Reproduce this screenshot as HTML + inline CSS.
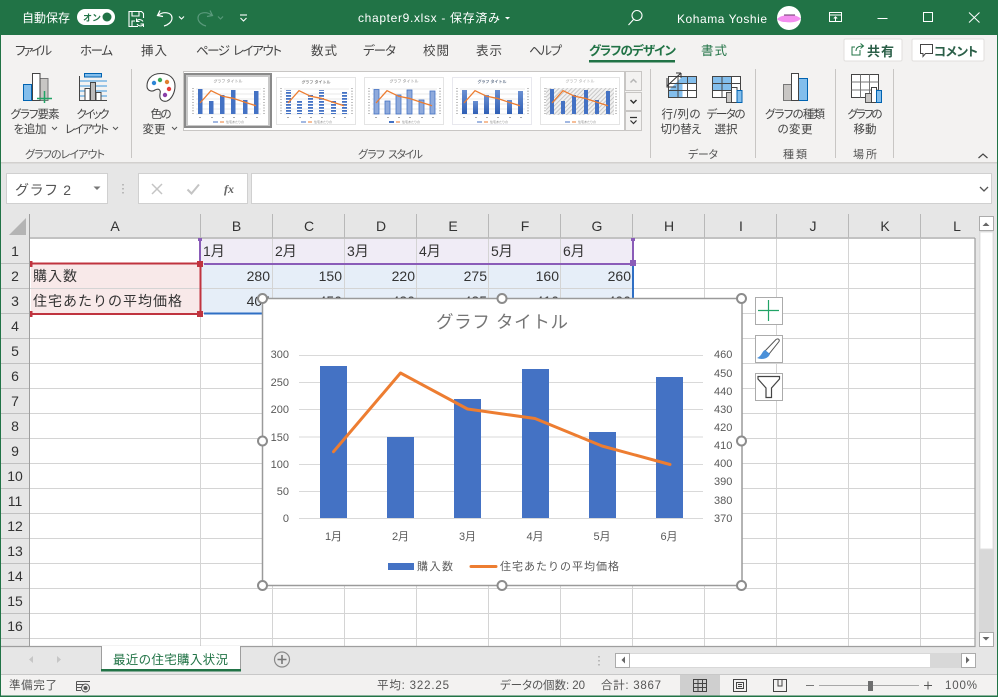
<!DOCTYPE html>
<html lang="ja"><head><meta charset="utf-8"><title>chapter9.xlsx</title>
<style>
html,body{margin:0;padding:0;background:#fff;width:998px;height:697px;overflow:hidden}
svg{display:block;position:absolute;left:0;top:0}
text{font-family:"Liberation Sans","Noto Sans CJK JP",sans-serif;fill:#444;font-size:12px}
.t{fill:#fff}
.tab{font-size:12.5px;fill:#444;font-feature-settings:"palt"}
.rb{font-size:11.5px;text-anchor:middle;fill:#444;font-feature-settings:"palt"}
.gl{font-size:11px;text-anchor:middle;fill:#555;font-feature-settings:"palt"}
.gs{font-size:11px;fill:#555;font-feature-settings:"palt"}
.h{font-size:14px;text-anchor:middle;fill:#333}
.rn{font-size:14px;text-anchor:middle;fill:#333}
.c{font-size:14px;fill:#333}
.n{font-size:14px;fill:#333;text-anchor:end}
.ax{font-size:11px;fill:#595959}
.s{font-size:11.5px;fill:#555;font-feature-settings:"palt"}
.mini{font-size:4px;fill:#888;text-anchor:middle}
</style></head><body>
<svg width="998" height="697" viewBox="0 0 998 697" xmlns="http://www.w3.org/2000/svg">
<defs>
<pattern id="st" width="4" height="3" patternUnits="userSpaceOnUse"><rect width="4" height="3" fill="#fff"/><rect width="4" height="1.8" fill="#4472c4"/></pattern>
<pattern id="ht" width="3" height="3" patternUnits="userSpaceOnUse" patternTransform="rotate(45)"><rect width="3" height="3" fill="#f2f2f2"/><rect width="1" height="3" fill="#c8c8c8"/></pattern>
<linearGradient id="gr" x1="0" y1="0" x2="0" y2="1"><stop offset="0" stop-color="#6a8fd2"/><stop offset="1" stop-color="#2f5fb5"/></linearGradient>
<g id="axes">
<g stroke="#e2e2e2" stroke-width=".7"><path d="M8 12H73M8 17H73M8 22H73M8 27H73M8 32H73M8 37H73"/></g>
<path d="M5 11V38M76 11V38" stroke="#999" stroke-width="1.6" stroke-dasharray=".8 2" fill="none"/>
<path d="M11 40.500h2M23 40.500h2M34 40.500h2M45 40.500h2M57 40.500h2M68 40.500h2" stroke="#aaa"/>
</g>
<path id="ln" d="M12 26L23 13.700L34.700 19.300L45 21.300L57 25.300L68 28.700" fill="none" stroke="#ed7d31" stroke-width="1.300"/>
</defs>

<!-- window base -->
<rect width="998" height="697" fill="#e6e6e6"/>
<!-- title bar -->
<rect width="998" height="35" fill="#217346"/>
<text x="22" y="22" class="t" style="font-size:12px">自動保存</text>
<rect x="77" y="9" width="38" height="16" rx="8" fill="#fff"/>
<text x="83" y="21" style="font-size:9px;fill:#217346;font-weight:bold">オン</text>
<circle cx="107" cy="17" r="4.500" fill="#217346"/>
<g fill="none" stroke="#fff" stroke-width="1.100">
<path d="M138 26.500H129V11.500H141.500L143.500 13.500V18"/>
<path d="M132 11.500V16H139V11.500M132 26V21H135"/>
<path d="M143 21.500a4 4 0 0 0-6.500-.5M137 24a4 4 0 0 0 6.500 .5M136.500 18.500V21.500H139.500M143.500 27V24H140.500" stroke-width="1"/>
<path d="M160 10.500L157.500 15.500L163 16.500M158 15.500C163 11 172 12 172 18C172 22 168 25 164 26" stroke-width="1.200"/>
<path d="M179 16.500l2.500 2.500l2.500-2.500"/>
<g stroke="#5a9a7c"><path d="M210 10.500L212.500 15.500L207 16.500M212 15.500C207 11 198 12 198 18C198 22 202 25 206 26" stroke-width="1.200"/><path d="M218 16.500l2.500 2.500l2.500-2.500"/></g>
<path d="M240 15h7"/><path d="M240.500 18l3 3l3-3"/>
</g>
<text x="358" y="22" class="t" style="font-size:12px" textLength="142">chapter9.xlsx  -  保存済み</text>
<path d="M505 17h5l-2.500 2.500z" fill="#fff"/>
<g fill="none" stroke="#fff" stroke-width="1.100"><circle cx="637" cy="15.500" r="5"/><path d="M633.500 19.500L628.500 25"/></g>
<text x="677" y="23" class="t" style="font-size:12px" textLength="90">Kohama Yoshie</text>
<circle cx="789" cy="18" r="12" fill="#fff"/>
<path d="M777 19C781 15 786 15.500 789 15C793 14 797 16 801 18.500C797 23 790 22.500 785 22C782 22 779 21 777 19Z" fill="#f48ef0"/>
<path d="M784 15h11" stroke="#6a3a6a" stroke-width="1"/>
<g fill="none" stroke="#fff" stroke-width="1"><rect x="829.500" y="12.500" width="12" height="9"/><path d="M829.500 15H841.500M835.500 21V17M833.800 18.500L835.500 16.800L837.200 18.500"/>
<path d="M877.500 18.500H887.500"/><rect x="923.500" y="12.500" width="9" height="9"/><path d="M969 12.500L979.500 22.500M979.500 12.500L969 22.500"/></g>

<!-- ribbon -->
<rect x="0" y="35" width="998" height="127" fill="#f3f2f1"/>
<rect x="0" y="162" width="998" height="1.500" fill="#d2d0ce"/>
<text x="15" y="55" class="tab" textLength="37">ファイル</text>
<text x="80" y="55" class="tab" textLength="33">ホーム</text>
<text x="141" y="55" class="tab" textLength="26">挿入</text>
<text x="196" y="55" class="tab" textLength="34">ページ</text>
<text x="233" y="55" class="tab" textLength="49">レイアウト</text>
<text x="311" y="55" class="tab" textLength="26">数式</text>
<text x="363" y="55" class="tab" textLength="33">データ</text>
<text x="423" y="55" class="tab" textLength="26">校閲</text>
<text x="476" y="55" class="tab" textLength="26">表示</text>
<text x="529" y="55" class="tab" textLength="33">ヘルプ</text>
<text x="589" y="55" class="tab" textLength="87" style="fill:#217346;font-weight:bold">グラフのデザイン</text>
<rect x="589" y="60" width="86" height="2.500" fill="#217346"/>
<text x="701" y="55" class="tab" textLength="26" style="fill:#217346">書式</text>
<rect x="844" y="39" width="58" height="22" rx="1.500" fill="#fff" stroke="#e1dfdd"/>
<rect x="912" y="39" width="72" height="22" rx="1.500" fill="#fff" stroke="#e1dfdd"/>
<g fill="none" stroke="#217346" stroke-width="1"><path d="M860 50v5h-8v-8h3M856 51c0-4 3-5 7-5M860.500 43.500L863.500 46L860.500 48.500"/><path d="M920.500 46.500h12v9h-7l-2.500 3v-3h-2.500z" stroke="#444" transform="translate(0,-2)"/></g>
<text x="867" y="56" style="font-size:13px;font-weight:bold;fill:#2b5f48" textLength="27">共有</text>
<text x="934" y="56" style="font-size:12.500px;font-weight:bold;fill:#2b5f48;font-feature-settings:'palt'" textLength="44">コメント</text>

<!-- group separators -->
<path d="M131.500 69V158M650.500 69V158M755.500 69V158M835.500 69V158M893.500 69V158" stroke="#c8c6c4"/>

<!-- chart element icon -->
<rect x="23.500" y="84.500" width="8" height="16" fill="#83beec" stroke="#0063b1"/>
<rect x="40" y="78.500" width="8" height="22" fill="#c8c6c4" stroke="#777"/>
<rect x="32.500" y="73.500" width="7.500" height="27" fill="#fff" stroke="#444"/>
<path d="M37 98.500H52M44.500 91V103" stroke="#21a366" stroke-width="1.500"/>
<text x="35" y="118" class="rb" textLength="49">グラフ要素</text>
<text x="30" y="133" class="rb" textLength="33">を追加</text>
<path d="M52 127l2.500 2.500l2.500-2.500" fill="none" stroke="#555"/>
<!-- quick layout icon -->
<rect x="84.500" y="73.500" width="17" height="3.500" fill="#83beec" stroke="#0063b1"/>
<path d="M79 81H107M79 86H107M79 91H107M79 96H107" stroke="#3a96dd"/>
<path d="M79.500 76V100.500H107" fill="none" stroke="#444"/>
<rect x="85" y="88.500" width="5" height="12" fill="#fff" stroke="#444"/>
<rect x="90.500" y="82.500" width="5" height="18" fill="#bbb" stroke="#444"/>
<rect x="96" y="92.500" width="5" height="8" fill="#fff" stroke="#444"/>
<text x="93" y="118" class="rb" textLength="33">クイック</text>
<text x="87" y="133" class="rb" textLength="44">レイアウト</text>
<path d="M113 127l2.500 2.500l2.500-2.500" fill="none" stroke="#555"/>
<!-- palette -->
<path d="M161 73.500C150 73.500 147 81 147 86C147 91 152 92 155 90C159 88 161 90 160 94C159 100 163 102 167 101C172 99 175 92 175 86C175 79 170 73.500 161 73.500Z" fill="#fff" stroke="#444" stroke-width="1.100"/>
<circle cx="154" cy="83" r="2.200" fill="#2e86d6"/><circle cx="160" cy="80" r="2.200" fill="#3aa655"/><circle cx="167" cy="82" r="2.200" fill="#e08030"/><circle cx="169" cy="89" r="2.200" fill="#e23b3b"/><circle cx="165" cy="95" r="2.200" fill="#8a3fa8"/>
<text x="161" y="118" class="rb" textLength="21">色の</text>
<text x="154" y="133" class="rb" textLength="23">変更</text>
<path d="M172 127l2.500 2.500l2.500-2.500" fill="none" stroke="#555"/>

<!-- gallery -->
<rect x="183.500" y="71.500" width="441" height="59" fill="#fff" stroke="#c8c6c4"/>
<rect x="185" y="74" width="86" height="53" fill="#c8c8c8" stroke="#8a8a8a" stroke-width="2"/>
<!-- thumb1 -->
<g transform="translate(188,77)"><rect width="80" height="48" fill="#fff"/>
<use href="#axes"/>
<text x="40" y="5.500" class="mini">グラフ タイトル</text>
<g fill="#4472c4"><rect x="10" y="12" width="4.500" height="25"/><rect x="21" y="24" width="4.500" height="13"/><rect x="32" y="18" width="4.500" height="19"/><rect x="43" y="13" width="4.500" height="24"/><rect x="55" y="23" width="4.500" height="14"/><rect x="66" y="14" width="4.500" height="23"/></g>
<use href="#ln"/><path d="M25 45h5" stroke="#4472c4"/><path d="M32 45h4" stroke="#ed7d31"/><text x="47" y="46" style="font-size:3px;fill:#888" text-anchor="middle">住宅あたりの</text></g>
<!-- thumb2 -->
<g transform="translate(276,77)"><rect x=".5" y=".5" width="79" height="47" fill="#fff" stroke="#e4e4e4"/>
<use href="#axes"/>
<text x="40" y="6.500" class="mini" style="font-weight:bold">グラフ タイトル</text>
<g fill="url(#st)"><rect x="10" y="13" width="5" height="24"/><rect x="21" y="24" width="5" height="13"/><rect x="32" y="18" width="5" height="19"/><rect x="43" y="13" width="5" height="24"/><rect x="55" y="23" width="5" height="14"/><rect x="66" y="14" width="5" height="23"/></g>
<use href="#ln"/><path d="M25 45h5" stroke="#4472c4"/><path d="M32 45h4" stroke="#ed7d31"/><text x="47" y="46" style="font-size:3px;fill:#888" text-anchor="middle">住宅あたりの</text></g>
<!-- thumb3 -->
<g transform="translate(364,77)"><rect x=".5" y=".5" width="79" height="47" fill="#fff" stroke="#e4e4e4"/>
<use href="#axes"/>
<text x="40" y="5.500" class="mini">グラフ タイトル</text>
<g fill="#8faadc" stroke="#4472c4" stroke-width=".8"><rect x="10" y="12.500" width="5" height="24.500"/><rect x="21" y="24" width="5" height="13"/><rect x="32" y="18" width="5" height="19"/><rect x="43" y="13" width="5" height="24"/><rect x="55" y="23" width="5" height="14"/><rect x="66" y="14" width="5" height="23"/></g>
<use href="#ln"/><path d="M25 45h5" stroke="#4472c4" stroke-width="2"/><path d="M32 45h4" stroke="#ed7d31"/><text x="47" y="46" style="font-size:3px;fill:#888" text-anchor="middle">住宅あたりの</text></g>
<!-- thumb4 -->
<g transform="translate(452,77)"><rect x=".5" y=".5" width="79" height="47" fill="#fff" stroke="#e8e8ee"/>
<use href="#axes"/>
<text x="40" y="6" class="mini" style="font-weight:bold;fill:#6b7a90">グラフ タイトル</text>
<g fill="url(#gr)"><rect x="10" y="13" width="5" height="24"/><rect x="21" y="24" width="5" height="13"/><rect x="32" y="18" width="5" height="19"/><rect x="43" y="13" width="5" height="24"/><rect x="55" y="23" width="5" height="14"/><rect x="66" y="14" width="5" height="23"/></g>
<use href="#ln"/><path d="M25 45h5" stroke="#4472c4"/><path d="M32 45h4" stroke="#ed7d31"/><text x="47" y="46" style="font-size:3px;fill:#888" text-anchor="middle">住宅あたりの</text></g>
<!-- thumb5 -->
<g transform="translate(540,77)"><rect x=".5" y=".5" width="79" height="47" fill="#fff" stroke="#e4e4e4"/>
<rect x="6" y="11" width="68" height="27" fill="url(#ht)"/>
<path d="M5 11V38M76 11V38" stroke="#999" stroke-width="1.600" stroke-dasharray=".8 2" fill="none"/>
<text x="40" y="5.500" class="mini" style="fill:#aaa">グラフ タイトル</text>
<g fill="#4472c4"><rect x="10" y="12" width="4" height="25"/><rect x="21" y="24" width="4" height="13"/><rect x="32" y="18" width="4" height="19"/><rect x="44" y="13" width="4" height="24"/><rect x="55" y="23" width="4" height="14"/><rect x="66" y="14" width="4" height="23"/></g>
<use href="#ln"/><path d="M25 45h5" stroke="#4472c4"/><path d="M32 45h4" stroke="#ed7d31"/><text x="47" y="46" style="font-size:3px;fill:#888" text-anchor="middle">住宅あたりの</text></g>
<!-- gallery scroll -->
<g fill="#f3f2f1" stroke="#c8c6c4"><rect x="625.500" y="71.500" width="16" height="19"/><rect x="625.500" y="92.500" width="16" height="18"/><rect x="625.500" y="111.500" width="16" height="19"/></g>
<path d="M630.500 82.500l3-3l3 3" fill="none" stroke="#b5b5b5" stroke-width="1.500"/>
<path d="M630.500 100l3 3l3-3" fill="none" stroke="#333" stroke-width="1.500"/>
<path d="M630 117.500h7M630.500 120.500l3 3l3-3" fill="none" stroke="#333" stroke-width="1.200"/>

<!-- switch row/col -->
<g stroke="#444" fill="#fff"><rect x="668.500" y="76.500" width="28" height="21"/></g>
<path d="M669 97V90L682 77H696V83.500H682.500V97Z" fill="#83beec"/>
<path d="M668.500 83.500H696.500M668.500 90.500H696.500M678 76.500V97.500M687.500 76.500V97.500" stroke="#444" fill="none"/>
<rect x="668.500" y="76.500" width="28" height="21" fill="none" stroke="#444"/>
<path d="M667 86L681 73M681 73H676M681 73V78M667 78V87H676" fill="none" stroke="#333"/>
<text x="681" y="118" class="rb" textLength="39">行/列の</text>
<text x="681" y="133" class="rb" textLength="41">切り替え</text>
<!-- select data -->
<rect x="712.500" y="76.500" width="28" height="21" fill="#fff" stroke="#444"/>
<rect x="713" y="77" width="19" height="13" fill="#83beec"/>
<path d="M712.500 83.500H740.500M712.500 90.500H740.500M722 76.500V97.500M731.500 76.500V97.500" stroke="#444" fill="none"/>
<rect x="726.500" y="92.500" width="5" height="10" fill="#c8c6c4" stroke="#555"/>
<rect x="731.500" y="87.500" width="5.500" height="15" fill="#fff" stroke="#444"/>
<rect x="737" y="90.500" width="5" height="12" fill="#83beec" stroke="#0063b1"/>
<text x="726" y="118" class="rb" textLength="39">データの</text>
<text x="726" y="133" class="rb" textLength="23">選択</text>
<!-- change type -->
<rect x="783.500" y="84.500" width="8" height="16" fill="#c8c6c4" stroke="#777"/>
<rect x="798.500" y="78.500" width="9" height="22" fill="#83beec" stroke="#0063b1"/>
<rect x="791.500" y="73.500" width="7" height="27" fill="#fff" stroke="#444"/>
<text x="795" y="118" class="rb" textLength="60">グラフの種類</text>
<text x="795" y="133" class="rb" textLength="35">の変更</text>
<!-- move -->
<rect x="851.500" y="74.500" width="27" height="23" fill="#fff" stroke="#444"/>
<path d="M851.500 82H878.500M851.500 90H878.500M860.500 74.500V97.500M869.500 74.500V97.500" stroke="#777" fill="none"/>
<rect x="865.500" y="93.500" width="6" height="9" fill="#c8c6c4" stroke="#555"/>
<rect x="871.500" y="87.500" width="5" height="15" fill="#fff" stroke="#444"/>
<rect x="876.500" y="90.500" width="5" height="12" fill="#83beec" stroke="#0063b1"/>
<text x="865" y="118" class="rb" textLength="35">グラフの</text>
<text x="865" y="133" class="rb" textLength="23">移動</text>
<!-- group labels -->
<text x="65" y="158" class="gl" textLength="80">グラフのレイアウト</text>
<text x="358" y="158" class="gs" textLength="27">グラフ</text>
<text x="388" y="158" class="gs" textLength="35">スタイル</text>
<text x="703" y="158" class="gl" textLength="30">データ</text>
<text x="795" y="158" class="gl" textLength="24">種類</text>
<text x="865" y="158" class="gl" textLength="24">場所</text>
<path d="M978.500 158l4.500-4l4.500 4" fill="none" stroke="#444" stroke-width="1.200"/>

<!-- formula bar -->
<rect x="6.500" y="173.500" width="101" height="30" fill="#fff" stroke="#d0d0d0"/>
<text x="15" y="195" style="font-size:14px;fill:#555" textLength="56">グラフ 2</text>
<path d="M93.500 186.500h7l-3.500 3.500z" fill="#777"/>
<path d="M123 184v1.500M123 188v1.500M123 192v1.500" stroke="#aaa" stroke-width="1.500"/>
<rect x="138.500" y="173.500" width="109" height="30" fill="#fff" stroke="#d0d0d0"/>
<path d="M152 184L162 194M162 184L152 194" stroke="#c4c4c4" stroke-width="1.500"/>
<path d="M187.500 189.500L191.500 193.500L199 184.500" fill="none" stroke="#c4c4c4" stroke-width="2"/>
<text x="224" y="193" style="font-family:'Liberation Serif',serif;font-style:italic;font-weight:bold;font-size:12px;fill:#666">fx</text>
<rect x="251.500" y="173.500" width="740" height="30" fill="#fff" stroke="#d0d0d0"/>
<path d="M980 187l4 4l4-4" fill="none" stroke="#555" stroke-width="1.300"/>

<!-- grid -->
<rect x="1" y="214" width="974" height="24" fill="#e6e6e6"/>
<rect x="1" y="238" width="29" height="408" fill="#e6e6e6"/>
<rect x="30" y="239" width="945" height="407" fill="#fff"/>
<path d="M26 218V235H9Z" fill="#b4b4b4"/>
<path d="M30 238H975M29.500 214V646" stroke="#9e9e9e" fill="none"/>
<!-- selection tints -->
<rect x="201" y="239" width="432" height="24" fill="#f0ecf6"/>
<rect x="201" y="264" width="432" height="49" fill="#e6eef8"/>
<rect x="31" y="264" width="169" height="49" fill="#f8e9e9"/>
<g stroke="#d4d4d4" fill="none">
<path d="M30 263.500H975M30 288.500H975M30 313.500H975M30 338.500H975M30 363.500H975M30 388.500H975M30 413.500H975M30 438.500H975M30 463.500H975M30 488.500H975M30 513.500H975M30 538.500H975M30 563.500H975M30 588.500H975M30 613.500H975M30 638.500H975"/>
<path d="M200.500 239V646M272.500 239V646M344.500 239V646M416.500 239V646M488.500 239V646M560.500 239V646M632.500 239V646M704.500 239V646M776.500 239V646M848.500 239V646M920.500 239V646"/>
</g>
<path d="M29 263.500H0M29 288.500H0M29 313.500H0M29 338.500H0M29 363.500H0M29 388.500H0M29 413.500H0M29 438.500H0M29 463.500H0M29 488.500H0M29 513.500H0M29 538.500H0M29 563.500H0M29 588.500H0M29 613.500H0M29 638.500H0" stroke="#c0c0c0"/>
<path d="M200.500 214V238M272.500 214V238M344.500 214V238M416.500 214V238M488.500 214V238M560.500 214V238M632.500 214V238M704.500 214V238M776.500 214V238M848.500 214V238M920.500 214V238" stroke="#b8b8b8"/>
<path d="M975 238V646.500H0" fill="none" stroke="#9e9e9e" stroke-width="1.200"/>
<text x="115" y="231" class="h">A</text><text x="236.500" y="231" class="h">B</text><text x="309" y="231" class="h">C</text><text x="381" y="231" class="h">D</text><text x="453" y="231" class="h">E</text><text x="525" y="231" class="h">F</text><text x="597" y="231" class="h">G</text><text x="669" y="231" class="h">H</text><text x="741" y="231" class="h">I</text><text x="813" y="231" class="h">J</text><text x="885" y="231" class="h">K</text><text x="957" y="231" class="h">L</text>
<text x="15" y="256" class="rn">1</text><text x="15" y="281" class="rn">2</text><text x="15" y="306" class="rn">3</text><text x="15" y="331" class="rn">4</text><text x="15" y="356" class="rn">5</text><text x="15" y="381" class="rn">6</text><text x="15" y="406" class="rn">7</text><text x="15" y="431" class="rn">8</text><text x="15" y="456" class="rn">9</text><text x="15" y="481" class="rn">10</text><text x="15" y="506" class="rn">11</text><text x="15" y="531" class="rn">12</text><text x="15" y="556" class="rn">13</text><text x="15" y="581" class="rn">14</text><text x="15" y="606" class="rn">15</text><text x="15" y="631" class="rn">16</text>
<text x="203" y="256" class="c">1月</text><text x="275" y="256" class="c">2月</text><text x="347" y="256" class="c">3月</text><text x="419" y="256" class="c">4月</text><text x="491" y="256" class="c">5月</text><text x="563" y="256" class="c">6月</text>
<text x="33" y="281" class="c" textLength="44">購入数</text>
<text x="33" y="306" class="c" textLength="149">住宅あたりの平均価格</text>
<text x="270" y="281" class="n">280</text><text x="342" y="281" class="n">150</text><text x="415" y="281" class="n">220</text><text x="487" y="281" class="n">275</text><text x="559" y="281" class="n">160</text><text x="631" y="281" class="n">260</text>
<text x="270" y="306" class="n">405</text><text x="342" y="306" class="n">450</text><text x="415" y="306" class="n">430</text><text x="487" y="306" class="n">425</text><text x="559" y="306" class="n">410</text><text x="631" y="306" class="n">400</text>
<!-- range highlights -->
<path d="M200 240V261M204 264H632.500M633 239V262" fill="none" stroke="#8a5cb8" stroke-width="2"/>
<rect x="198" y="238" width="4" height="3" fill="#8a5cb8"/><rect x="631" y="238" width="4" height="3" fill="#8a5cb8"/>
<rect x="630" y="260" width="6" height="6" fill="#8a5cb8"/>
<path d="M204 313.500H262M633 266V298" fill="none" stroke="#2f6fc4" stroke-width="2"/>
<path d="M31 263.500H198M31 314H198M200.500 266V311" fill="none" stroke="#c0343f" stroke-width="2"/>
<rect x="197" y="261" width="6" height="6" fill="#c0343f"/><rect x="197" y="311" width="6" height="6" fill="#c0343f"/><rect x="30" y="261" width="2.500" height="6" fill="#c0343f"/><rect x="30" y="311" width="2.500" height="6" fill="#c0343f"/>

<!-- chart -->
<rect x="262.500" y="298.500" width="479.500" height="287" fill="#fff" stroke="#9a9a9a" stroke-width="1.500"/>
<text x="436" y="328" style="font-size:17.500px;fill:#757575" textLength="132">グラフ タイトル</text>
<path d="M299 355.500H703M299 382.500H703M299 409.500H703M299 437H703M299 464.500H703M299 491.500H703M299 518.500H703" stroke="#d9d9d9"/>
<g fill="#4472c4"><rect x="320" y="366" width="27" height="152"/><rect x="387" y="437" width="27" height="81"/><rect x="454" y="399" width="27" height="119"/><rect x="522" y="369" width="27" height="149"/><rect x="589" y="432" width="27" height="86"/><rect x="656" y="377" width="27" height="141"/></g>
<path d="M333.500 451.700L400.500 373L467.500 409L535 418.500L602 446L670 464.500" fill="none" stroke="#ed7d31" stroke-width="3" stroke-linejoin="round" stroke-linecap="round"/>
<g text-anchor="end"><text x="289" y="358" class="ax">300</text><text x="289" y="386" class="ax">250</text><text x="289" y="413" class="ax">200</text><text x="289" y="441" class="ax">150</text><text x="289" y="468" class="ax">100</text><text x="289" y="495" class="ax">50</text><text x="289" y="522" class="ax">0</text></g>
<g><text x="714" y="358" class="ax">460</text><text x="714" y="377" class="ax">450</text><text x="714" y="395" class="ax">440</text><text x="714" y="413" class="ax">430</text><text x="714" y="431" class="ax">420</text><text x="714" y="449" class="ax">410</text><text x="714" y="467" class="ax">400</text><text x="714" y="485" class="ax">390</text><text x="714" y="504" class="ax">380</text><text x="714" y="522" class="ax">370</text></g>
<g text-anchor="middle"><text x="333.500" y="540" class="ax">1月</text><text x="400.500" y="540" class="ax">2月</text><text x="467.500" y="540" class="ax">3月</text><text x="535" y="540" class="ax">4月</text><text x="602" y="540" class="ax">5月</text><text x="669" y="540" class="ax">6月</text></g>
<rect x="388" y="563" width="26" height="7" fill="#4472c4"/>
<text x="417" y="570" class="ax" textLength="36">購入数</text>
<path d="M471 566.500H496" stroke="#ed7d31" stroke-width="3" stroke-linecap="round"/>
<text x="500" y="570" class="ax" textLength="119">住宅あたりの平均価格</text>
<g fill="#fff" stroke="#8c8c8c" stroke-width="2"><circle cx="262.500" cy="298.500" r="4.500"/><circle cx="502" cy="298.500" r="4.500"/><circle cx="741.500" cy="298.500" r="4.500"/><circle cx="262.500" cy="441" r="4.500"/><circle cx="741.500" cy="441" r="4.500"/><circle cx="262.500" cy="585.500" r="4.500"/><circle cx="502" cy="585.500" r="4.500"/><circle cx="741.500" cy="585.500" r="4.500"/></g>
<!-- chart side buttons -->
<g fill="#fff" stroke="#ababab"><rect x="755.500" y="297.500" width="27" height="27"/><rect x="755.500" y="335.500" width="27" height="27"/><rect x="755.500" y="373.500" width="27" height="27"/></g>
<path d="M758 310.500H779M768.500 300V321" stroke="#21a366" stroke-width="1.200"/>
<path d="M765 351L776 339.500C778 338 780 339.500 779 341.500L769 354Z" fill="#fff" stroke="#555"/>
<path d="M765 350C762 351 762 356 757 358C762 360 768 359 770 354Z" fill="#4a90d9"/>
<path d="M758 376.500H779.500V379L771.500 388V397.500H766V388L758 379Z" fill="#fff" stroke="#444" stroke-width="1.200"/>

<!-- vertical scrollbar -->
<rect x="979" y="216" width="15" height="430" fill="#d8d8d8"/>
<rect x="980" y="232" width="13" height="317" fill="#fff" stroke="#e0e0e0"/>
<rect x="979.500" y="216.500" width="14" height="14" fill="#fff" stroke="#ababab"/>
<path d="M982.500 226h7l-3.500-3.500z" fill="#666"/>
<rect x="979.500" y="632.500" width="14" height="14" fill="#fff" stroke="#ababab"/>
<path d="M982.500 637h7l-3.500 3.500z" fill="#666"/>

<!-- sheet tab -->
<path d="M101.500 646.500V671H240.500V646.500" fill="#fff" stroke="#9e9e9e"/>
<rect x="101" y="669" width="140" height="2.500" fill="#217346"/>
<rect x="102" y="646" width="138" height="2" fill="#fff"/>
<text x="113" y="664" style="font-size:12.500px;fill:#217346" textLength="115">最近の住宅購入状況</text>
<path d="M33 656l-4 3.500l4 3.500zM57 656l4 3.500l-4 3.500z" fill="#c6c6c6"/>
<circle cx="282" cy="659.500" r="7.500" fill="none" stroke="#8a8a8a" stroke-width="1.200"/>
<path d="M277.500 659.500H286.500M282 655V664" stroke="#777" stroke-width="1.600"/>
<path d="M599 656v1.500M599 660v1.500M599 664v1.500" stroke="#aaa" stroke-width="1.500"/>
<rect x="615" y="653" width="361" height="15" fill="#d8d8d8"/>
<rect x="630" y="654" width="300" height="13" fill="#fff"/>
<rect x="615.500" y="653.500" width="14" height="14" fill="#fff" stroke="#ababab"/>
<path d="M625 656.500v7l-3.500-3.500z" fill="#666"/>
<rect x="961.500" y="653.500" width="14" height="14" fill="#fff" stroke="#ababab"/>
<path d="M966 656.500v7l3.500-3.500z" fill="#666"/>

<!-- status bar -->
<rect x="0" y="674" width="998" height="22" fill="#f3f2f1"/>
<rect x="0" y="674" width="998" height="1" fill="#c8c8c8"/>
<rect x="680" y="675" width="40" height="20.500" fill="#cfcfcf"/>
<text x="9" y="689" class="s" textLength="48">準備完了</text>
<g fill="none" stroke="#555"><path d="M76.500 681.500H90M76.500 684.500H84M76.500 687.500H81M76.500 690.500H81M76.500 681.500V691"/><circle cx="85.500" cy="688" r="4"/></g><circle cx="85.500" cy="688" r="2" fill="#555"/>
<text x="377" y="689" class="s" textLength="72">平均: 322.25</text>
<text x="500" y="689" class="s" textLength="85">データの個数: 20</text>
<text x="601" y="689" class="s" textLength="60">合計: 3867</text>
<g fill="none" stroke="#444"><rect x="693.500" y="679.500" width="13" height="12"/><path d="M693.500 683.500H706.500M693.500 687.500H706.500M698 679.500V691.500M702.500 679.500V691.500"/>
<rect x="733.500" y="679.500" width="13" height="12"/><rect x="736.500" y="682.500" width="7" height="6"/><path d="M738 684.500H742M738 686.500H742"/>
<rect x="773.500" y="679.500" width="13" height="12"/><path d="M778 679.500V686H782V679.500"/></g>
<path d="M806 685.500H814" stroke="#777"/><path d="M819 685.500H919" stroke="#a8a8a8"/>
<rect x="868" y="681" width="5" height="10" fill="#6e6e6e"/>
<path d="M924 685.500H932M928 681.500V689.500" stroke="#555"/>
<text x="945" y="689" class="s" textLength="32">100%</text>

<!-- window edge -->
<rect x="0" y="35" width="1" height="662" fill="#217346"/>
<rect x="0" y="695.500" width="998" height="1.500" fill="#217346"/>
<rect x="997" y="35" width="1" height="662" fill="#217346"/>
</svg>
</body></html>
